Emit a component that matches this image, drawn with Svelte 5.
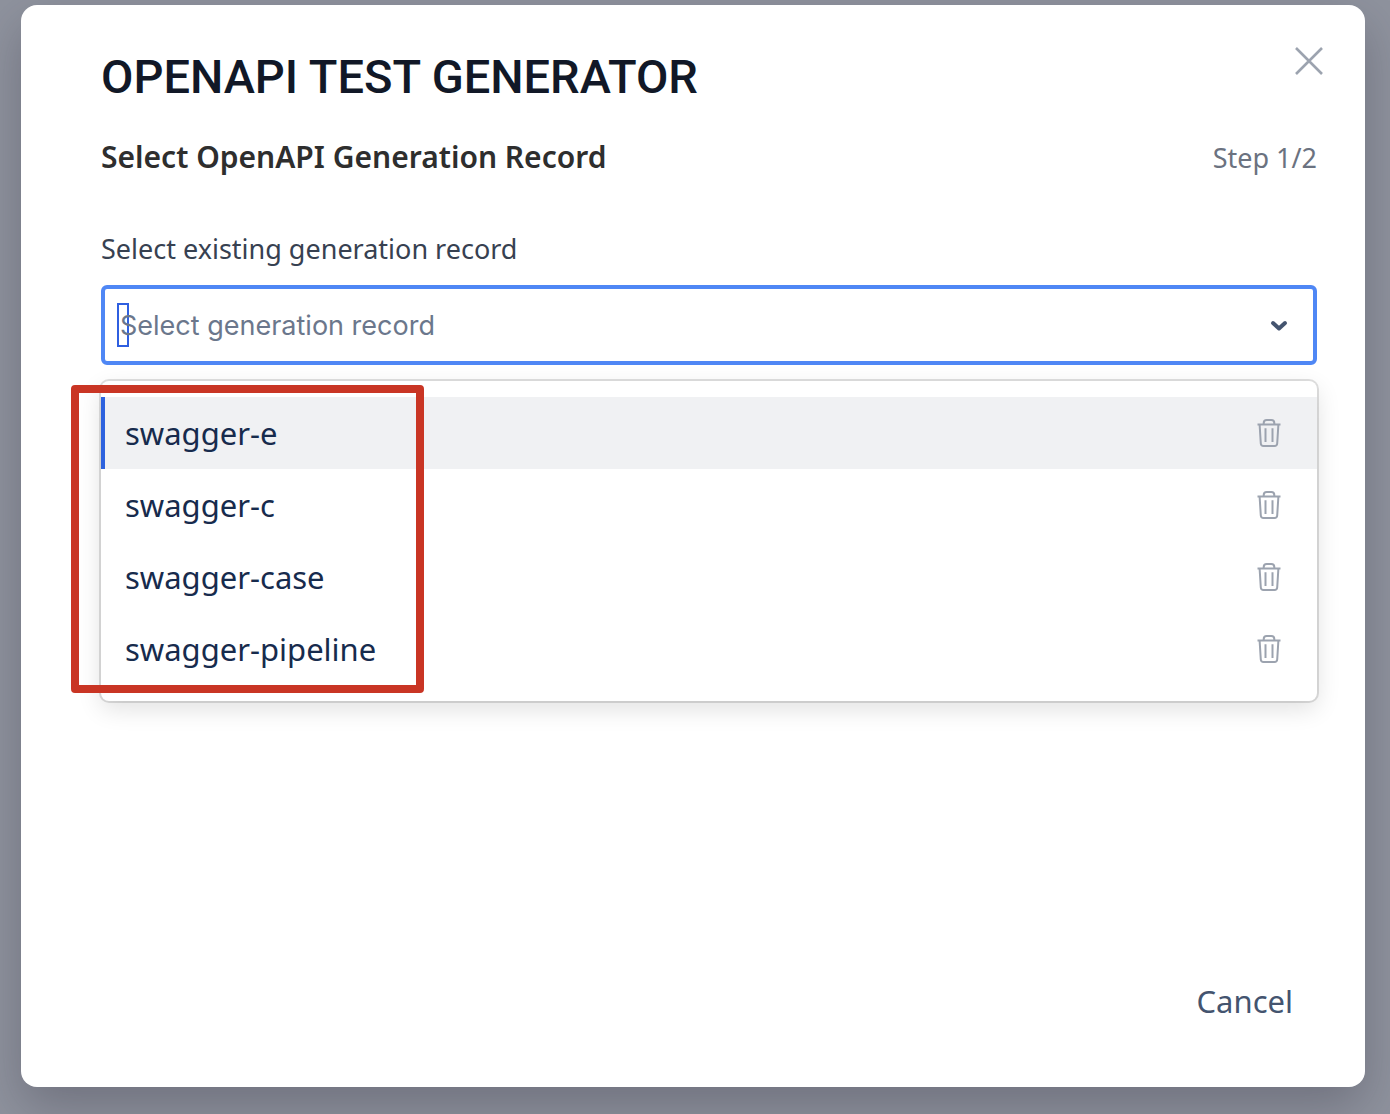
<script>
  let records = $state([
    "swagger-e",
    "swagger-c",
    "swagger-case",
    "swagger-pipeline",
  ]);
  let active = $state(0);
  let search = $state("");

  function removeRecord(name) {
    records = records.filter((record) => record !== name);
  }
</script>

<div class="backdrop">
  <div class="dialog" role="dialog" aria-labelledby="dialog-title">
    <button class="close" aria-label="Close">
      <svg width="28" height="28" viewBox="0 0 28 28">
        <path d="M1 1 27 27M27 1 1 27" />
      </svg>
    </button>

    <h1 id="dialog-title">OPENAPI TEST GENERATOR</h1>

    <div class="step">
      <h2>Select OpenAPI Generation Record</h2>
      <span>Step 1/2</span>
    </div>

    <label for="record">Select existing generation record</label>

    <div class="select">
      <div class="control">
        <input
          bind:value={search}
          type="text"
          id="record"
          role="combobox"
          aria-expanded="true"
          aria-controls="record-list"
        />
        <span class="placeholder">Select generation record</span>
        <svg class="chevron" width="20" height="14" viewBox="0 0 20 14">
          <path d="M4 5 10 10.5 16 5" />
        </svg>
      </div>

      <ul class="menu" id="record-list">
        {#each records as record, i}
          <li class:active={i === active} onmouseenter={() => (active = i)}>
            <button class="record">{record}</button>
            <button
              class="delete"
              aria-label="Delete {record}"
              onclick={() => removeRecord(record)}
            >
              <svg width="24" height="30" viewBox="0 0 24 30">
                <path
                  d="M.5 6.500H23.500M6.700 6V5Q6.700 2 9.700 2H14.300Q17.300 2 17.300 5V6M2.600 6.500 3.800 25.500Q4 28 6.500 28H17.500Q20 28 20.200 25.500L21.400 6.500M8.500 10.200V24M15.500 10.200V24"
                />
              </svg>
            </button>
          </li>
        {/each}
      </ul>

      <div class="highlight"></div>
    </div>

    <div class="footer">
      <button class="cancel">Cancel</button>
    </div>
  </div>
</div>

<style>
  * {
    box-sizing: border-box;
  }

  button {
    padding: 0;
    border: none;
    background: none;
    font: inherit;
    color: inherit;
    cursor: pointer;
  }

  svg {
    display: block;
    fill: none;
    stroke: #9ca3af;
    stroke-width: 2;
  }

  .backdrop {
    display: flex;
    min-height: 100vh;
    padding: 5px 25px 27px 21px;
    background: #8f939e;
    font-family: "Noto Sans", sans-serif;
    overflow: hidden;
  }

  .dialog {
    position: relative;
    display: flex;
    flex-direction: column;
    flex: 1;
    padding: 40px 48px 50px 80px;
    border-radius: 16px;
    background: #fff;
    box-shadow: 0 20px 50px rgba(40, 36, 52, 0.3);
  }

  .close {
    position: absolute;
    top: 42px;
    right: 42px;
  }

  .close svg {
    stroke-width: 2.6;
  }

  h1 {
    margin: 0;
    font-family: Roboto, sans-serif;
    font-size: 47px;
    font-weight: 500;
    line-height: 64px;
    color: #111827;
  }

  .step {
    display: flex;
    justify-content: space-between;
    align-items: center;
    margin-top: 24px;
  }

  h2 {
    margin: 0;
    font-size: 30px;
    font-weight: 600;
    line-height: 48px;
    color: #2e2e2e;
  }

  .step span {
    font-size: 27px;
    color: #6b7280;
  }

  label {
    margin-top: 48px;
    font-size: 27px;
    line-height: 40px;
    color: #374151;
  }

  /* ************ Select ************ */
  .select {
    position: relative;
    margin-top: 16px;
  }

  .control {
    position: relative;
    display: flex;
    align-items: center;
    justify-content: space-between;
    height: 80px;
    padding: 0 24px 0 12px;
    border: 4px solid #4f87f5;
    border-radius: 6px;
  }

  #record {
    width: 12px;
    height: 44px;
    padding: 0;
    border: 2px solid #2f5fe0;
    outline: none;
    background: none;
    font-size: 27px;
  }

  .placeholder {
    position: absolute;
    left: 15px;
    font-family: Inter, sans-serif;
    font-size: 27px;
    color: #6b778c;
    pointer-events: none;
  }

  .chevron {
    stroke: #44546f;
    stroke-width: 4;
    stroke-linecap: round;
    stroke-linejoin: round;
  }

  .menu {
    position: absolute;
    top: 100%;
    left: 0;
    right: 0;
    margin: 16px 0 0;
    padding: 16px 0;
    border-radius: 8px;
    background: #fff;
    box-shadow:
      0 0 0 2px rgba(0, 0, 0, 0.12),
      0 8px 24px rgba(0, 0, 0, 0.12);
    list-style: none;
  }

  li {
    display: flex;
    align-items: center;
    height: 72px;
    padding-right: 36px;
    border-left: 4px solid transparent;
  }

  li.active {
    border-left-color: #2d62de;
    background: #f0f1f3;
  }

  .record {
    flex: 1;
    padding-left: 20px;
    font-size: 31px;
    line-height: 72px;
    text-align: left;
    color: #172b4d;
  }

  .highlight {
    position: absolute;
    top: 100px;
    left: -30px;
    width: 353px;
    height: 308px;
    border: 8px solid #c93524;
    border-radius: 4px;
    pointer-events: none;
  }

  .footer {
    display: flex;
    justify-content: flex-end;
    margin-top: auto;
    padding-right: 24px;
  }

  .cancel {
    font-size: 31px;
    line-height: 72px;
    color: #44546f;
  }
</style>
